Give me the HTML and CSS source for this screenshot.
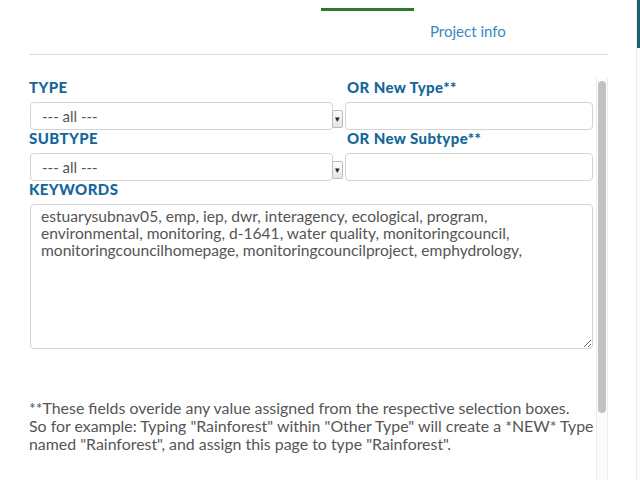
FILE: index.html
```html
<!DOCTYPE html>
<html lang="en">
<head>
    <meta charset="UTF-8">
    <meta name="viewport" content="width=device-width, initial-scale=1.0">
    <title>Page settings</title>
    <link rel="stylesheet" href="styles.css">
</head>
<body>

<div class="layout">
    <div class="main">
        <div class="nav">
            <span class="nav-active"></span>
        </div>
        <div class="tabs">
            <a class="tab" href="#">Project info</a>
        </div>

        <div class="panel">
            <div class="panel-body">
                <div class="grid">
                    <div class="field">
                        <label for="type">TYPE</label>
                        <div class="pick">
                            <select id="type"><option>--- all ---</option></select>
                            <span class="pick-btn">&#9662;</span>
                        </div>
                    </div>
                    <div class="field">
                        <label for="newType">OR New Type**</label>
                        <input type="text" id="newType">
                    </div>
                    <div class="field">
                        <label for="subtype">SUBTYPE</label>
                        <div class="pick">
                            <select id="subtype"><option>--- all ---</option></select>
                            <span class="pick-btn">&#9662;</span>
                        </div>
                    </div>
                    <div class="field">
                        <label for="newSubtype">OR New Subtype**</label>
                        <input type="text" id="newSubtype">
                    </div>
                </div>

                <label for="keywords">KEYWORDS</label>
                <textarea id="keywords">estuarysubnav05, emp, iep, dwr, interagency, ecological, program, environmental, monitoring, d-1641, water quality, monitoringcouncil, monitoringcouncilhomepage, monitoringcouncilproject, emphydrology,</textarea>

                <p class="note">**These fields overide any value assigned from the respective selection boxes.<br>So for example: Typing "Rainforest" within "Other Type" will create a *NEW* Type named "Rainforest", and assign this page to type "Rainforest".</p>
            </div>
            <div class="scroll-track">
                <div class="scroll-thumb"></div>
            </div>
        </div>
    </div>
    <div class="side">
        <div class="side-edge">
            <div class="side-mark"></div>
        </div>
    </div>
</div>

</body>
</html>
```

FILE: styles.css
```css
* {
    margin: 0;
    padding: 0;
    box-sizing: border-box;
}

body {
    font-family: 'Lato', sans-serif;
    background: #fff;
    color: #555;
    height: 480px;
    overflow: hidden;
}

.layout {
    display: flex;
    height: 480px;
}

.main {
    width: 608px;
    padding-left: 29px;
    display: flex;
    flex-direction: column;
}

.nav {
    height: 11px;
    padding-left: 292px;
    padding-top: 8px;
}

.nav-active {
    display: block;
    width: 93px;
    height: 3px;
    background-color: #2b7a2b;
}

.tabs {
    height: 44px;
    border-bottom: 1px solid #dcdcdc;
    display: flex;
    padding-left: 401px;
    padding-top: 11px;
}

.tab {
    font-size: 15px;
    color: #3a88c2;
    text-decoration: none;
}

.panel {
    margin-top: 23px;
    flex: 1;
    min-height: 0;
    display: flex;
    overflow: hidden;
}

.panel-body {
    flex: 1;
    padding-top: 1px;
    padding-right: 2px;
}

.scroll-track {
    width: 12px;
    background: #fcfcfc;
    border-left: 1px solid #ececec;
    border-right: 1px solid #ececec;
    padding: 3px 1px 0;
}

.scroll-thumb {
    height: 332px;
    background: #c2c2c2;
    border-radius: 5px;
}

.grid {
    display: grid;
    grid-template-columns: 316px 1fr;
}

label {
    display: block;
    font-weight: 900;
    font-size: 15px;
    letter-spacing: 0.4px;
    line-height: 17px;
    color: #15669b;
    margin-bottom: 6px;
}

.grid .field:nth-child(2n) label {
    padding-left: 2px;
}

.pick {
    display: flex;
    align-items: flex-end;
    padding-left: 1px;
}

select, input, textarea {
    font-family: 'Lato', sans-serif;
    font-size: 15px;
    color: #555;
    border: 1px solid #d4d4d4;
    border-radius: 4px;
    background: #fff;
    outline: none;
}

select {
    -webkit-appearance: none;
    appearance: none;
    width: 303px;
    height: 28px;
    padding-left: 11px;
}

.pick-btn {
    width: 11px;
    height: 18px;
    margin-left: -1px;
    margin-bottom: 2px;
    border: 1px solid #bbb;
    border-radius: 2px;
    background: linear-gradient(#fdfdfd, #e4e4e4);
    font-size: 9px;
    line-height: 16px;
    text-align: center;
    color: #222;
}

input {
    width: 248px;
    height: 28px;
    padding-left: 8px;
}

textarea {
    display: block;
    width: 563px;
    height: 145px;
    margin-left: 1px;
    padding: 3px 10px;
    font-size: 15.6px;
    line-height: 17px;
    resize: vertical;
}

.note {
    margin-top: 50px;
    font-size: 15.9px;
    line-height: 18px;
    color: #555;
}

.side {
    flex: 1;
    display: flex;
    justify-content: flex-end;
}

.side-edge {
    width: 4px;
    border-left: 1px solid #ececec;
}

.side-mark {
    height: 48px;
    background-color: #1d5f73;
}
```
